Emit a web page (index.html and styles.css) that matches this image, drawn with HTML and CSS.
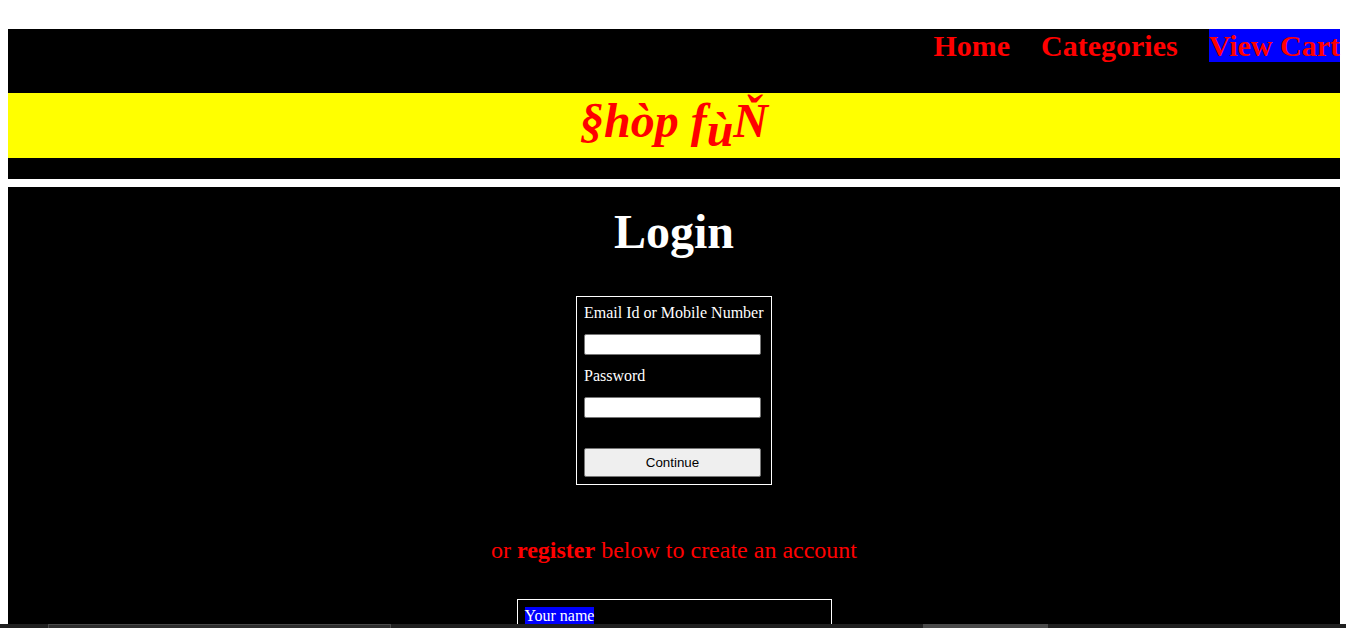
FILE: index.html
```html
<!DOCTYPE html>
<html>
<head>
<meta charset="utf-8">
<title>Shop fun - Login</title>
<link rel="stylesheet" href="styles.css">
</head>
<body>
<div class="page">
  <header class="header">
    <nav class="nav">
      <a class="nav-link" href="#">Home</a>
      <a class="nav-link" href="#">Categories</a>
      <a class="nav-link nav-link-cart" href="#">View Cart</a>
    </nav>
    <div class="logo-band">
      <span class="logo">§hòp f<span class="logo-sub">ù</span>Ň</span>
    </div>
  </header>
  <main class="main">
    <h1 class="title">Login</h1>
    <form class="login-box">
      <label class="field-label">Email Id or Mobile Number</label>
      <input class="field-input" type="text">
      <label class="field-label">Password</label>
      <input class="field-input" type="password">
      <button class="btn" type="button">Continue</button>
    </form>
    <p class="register-note">or <b>register</b> below to create an account</p>
    <form class="register-box">
      <label class="reg-label">Your name</label>
      <input class="field-input" type="text">
      <label class="reg-label">Email Id</label>
      <input class="field-input" type="text">
    </form>
  </main>
</div>
<div class="bottom-bar">
  <span class="bar-seg bar-seg-a"></span>
  <span class="bar-seg bar-seg-b"></span>
</div>
</body>
</html>
```
FILE: styles.css
```css
html, body {
  background: #ffffff;
}
body {
  margin: 0;
  padding: 29px 0 0 8px;
  font-family: "Liberation Serif", "Times New Roman", serif;
  overflow: hidden;
}
.page {
  width: 1332px;
}
.header {
  background: #000000;
  height: 150px;
  display: flex;
  flex-direction: column;
}
.nav {
  height: 64px;
  display: flex;
  justify-content: flex-end;
  align-items: flex-start;
  gap: 31px;
  white-space: nowrap;
}
.nav-link {
  color: #ff0000;
  font-weight: bold;
  font-size: 30px;
  line-height: 33px;
  text-decoration: none;
}
.nav-link-cart {
  background: #0000ff;
}
.logo-band {
  background: #ffff00;
  height: 65px;
  text-align: center;
  line-height: 55px;
}
.logo {
  color: #ff0000;
  font-style: italic;
  font-weight: bold;
  font-size: 48px;
}
.logo-sub {
  vertical-align: -9px;
  line-height: 0;
}
.main {
  background: #000000;
  margin-top: 8px;
  height: 460px;
  display: flex;
  flex-direction: column;
  align-items: center;
}
.title {
  color: #ffffff;
  font-size: 48px;
  font-weight: bold;
  margin: 17px 0 0;
  line-height: 55px;
}
.login-box {
  margin-top: 37px;
  border: 1px solid #ffffff;
  padding: 7px;
  width: 180px;
  display: flex;
  flex-direction: column;
  align-items: flex-start;
}
.field-label {
  color: #ffffff;
  font-size: 16px;
  line-height: 18px;
  white-space: nowrap;
}
.field-input {
  width: 177px;
  height: 21px;
  box-sizing: border-box;
  border: 1px solid #767676;
  border-radius: 2px;
  background: #ffffff;
  margin: 12px 0 12px;
  padding: 1px 2px;
}
.btn {
  margin-top: 18px;
  width: 177px;
  height: 29px;
  background: #efefef;
  border: 1px solid #767676;
  border-radius: 2px;
  font-family: "Liberation Sans", Arial, sans-serif;
  font-size: 13.33px;
  color: #000000;
}
.register-note {
  color: #ff0000;
  font-size: 24px;
  margin: 51px 0 0;
  line-height: 28px;
}
.register-note b {
  font-weight: bold;
}
.register-box {
  margin-top: 35px;
  border: 1px solid #ffffff;
  padding: 7px;
  width: 299px;
  display: flex;
  flex-direction: column;
  align-items: flex-start;
}
.reg-label {
  color: #ffffff;
  background: #0000ff;
  font-size: 16px;
  line-height: 18px;
}
.bottom-bar {
  position: fixed;
  left: 0;
  right: 0;
  bottom: 0;
  height: 4px;
  background: #202020;
}
.bar-seg {
  position: absolute;
  top: 0;
  height: 4px;
  box-sizing: border-box;
}
.bar-seg-a {
  left: 48px;
  width: 343px;
  background: #2e2e2e;
  border: 1px solid #4a4a4a;
  border-bottom: none;
}
.bar-seg-b {
  left: 923px;
  width: 125px;
  background: #4a4a4a;
}
```
